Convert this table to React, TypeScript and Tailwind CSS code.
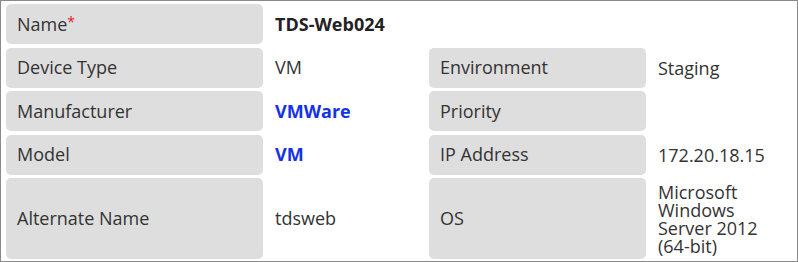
const rows: {
  label: string;
  value: string;
  required?: boolean;
  strong?: boolean;
  link?: boolean;
  label2?: string;
  value2?: string;
  tall?: boolean;
}[] = [
  { label: "Name", value: "TDS-Web024", required: true, strong: true },
  { label: "Device Type", value: "VM", label2: "Environment", value2: "Staging" },
  { label: "Manufacturer", value: "VMWare", link: true, label2: "Priority", value2: "" },
  { label: "Model", value: "VM", link: true, label2: "IP Address", value2: "172.20.18.15" },
  {
    label: "Alternate Name",
    value: "tdsweb",
    label2: "OS",
    value2: "Microsoft Windows Server 2012 (64-bit)",
    tall: true,
  },
];

export default function App() {
  return (
    <div
      className="w-[798px] h-[262px] border border-[#8a8a8a] bg-white pl-[5px] pt-[3px] pr-2 text-[18px] text-[#333333]"
      style={{ fontFamily: '"Open Sans", "Noto Sans", sans-serif' }}
    >
      <div className="grid grid-cols-[257px_142px_217px_1fr] gap-x-3 gap-y-[3.5px]">
        {rows.map((r) => (
          <div key={r.label} className="contents">
            <div
              className={`flex items-center rounded-[5px] bg-[#dedede] pl-[11px] ${
                r.tall ? "h-[81px]" : "h-10"
              }`}
            >
              {r.label}
              {r.required && <span className="self-start mt-[7px] text-[14px] text-[#e02020]">*</span>}
            </div>
            <div
              className={`flex items-center ${r.strong ? "font-bold text-[#222222]" : ""} ${
                r.link ? "font-bold text-[#1433e6]" : ""
              }`}
            >
              {r.value}
            </div>
            {r.label2 ? (
              <>
                <div className="flex items-center rounded-[5px] bg-[#dedede] pl-[11px]">{r.label2}</div>
                <div className="flex items-center leading-[18px] pr-2">{r.value2}</div>
              </>
            ) : (
              <div className="col-span-2" />
            )}
          </div>
        ))}
      </div>
    </div>
  );
}
